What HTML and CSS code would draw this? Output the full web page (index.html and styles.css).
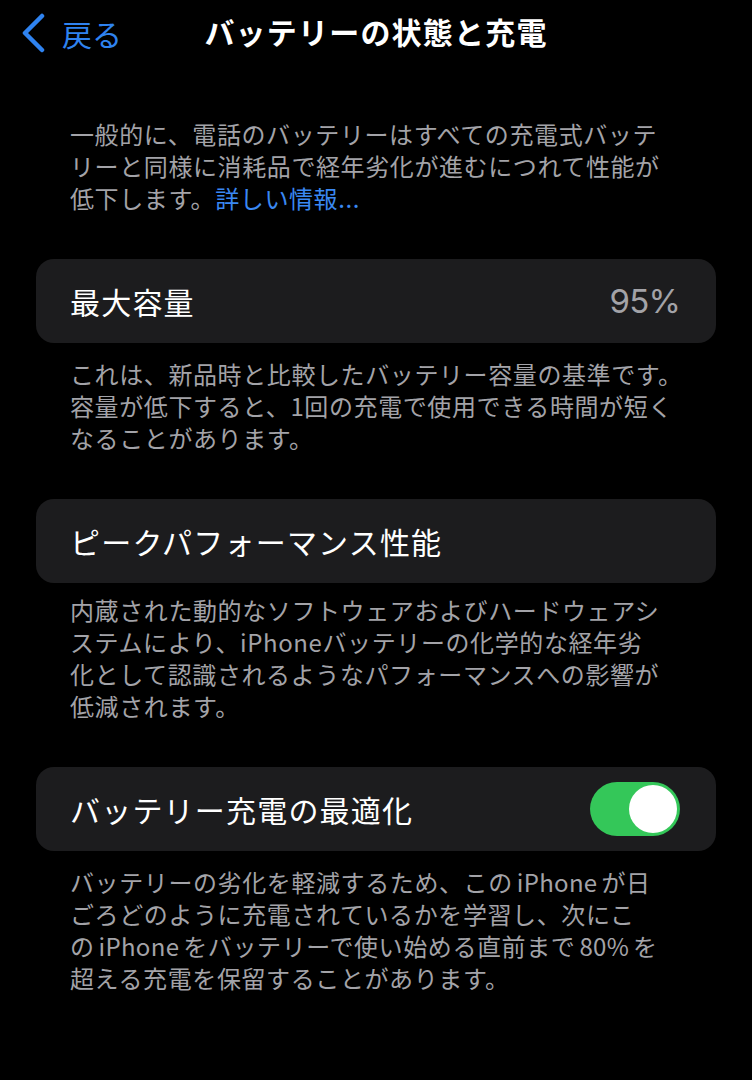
FILE: index.html
```html
<!DOCTYPE html>
<html lang="ja">
<head>
<meta charset="utf-8">
<title>バッテリーの状態と充電</title>
<link rel="stylesheet" href="styles.css">
</head>
<body>
<div class="screen">
  <header class="nav">
    <a class="back">
      <svg class="chev" width="28" height="40" viewBox="0 0 28 40"><polyline points="22,3 5,20 22,37" fill="none" stroke="#2f83f0" stroke-width="4.5" stroke-linecap="round" stroke-linejoin="round"/></svg>
      <span class="back-label">戻る</span>
    </a>
    <h1 class="title">バッテリーの状態と充電</h1>
    <span class="spacer"></span>
  </header>

  <p class="note intro">一般的に、電話のバッテリーはすべての充電式バッテ<br>リーと同様に消耗品で経年劣化が進むにつれて性能が<br>低下します。<span class="link">詳しい情報...</span></p>

  <div class="card">
    <span class="card-title">最大容量</span>
    <span class="card-value">95%</span>
  </div>
  <p class="note">これは、新品時と比較したバッテリー容量の基準です。<br>容量が低下すると、1回の充電で使用できる時間が短く<br>なることがあります。</p>

  <div class="card">
    <span class="card-title">ピークパフォーマンス性能</span>
  </div>
  <p class="note tight">内蔵された動的なソフトウェアおよびハードウェアシ<br>ステムにより、iPhoneバッテリーの化学的な経年劣<br>化として認識されるようなパフォーマンスへの影響が<br>低減されます。</p>

  <div class="card">
    <span class="card-title">バッテリー充電の最適化</span>
    <span class="toggle"><span class="knob"></span></span>
  </div>
  <p class="note">バッテリーの劣化を軽減するため、この<span class="lat">iPhone</span>が日<br>ごろどのように充電されているかを学習し、次にこ<br>の<span class="lat">iPhone</span>をバッテリーで使い始める直前まで<span class="lat">80%</span>を<br>超える充電を保留することがあります。</p>
</div>
</body>
</html>
```

FILE: styles.css
```css
html, body {
  margin: 0;
  padding: 0;
  background: #000;
}
body {
  width: 752px;
  height: 1080px;
  overflow: hidden;
  font-family: "Noto Sans CJK JP", "Noto Sans", sans-serif;
  color: #fff;
}
.screen {
  display: flex;
  flex-direction: column;
}
.nav {
  height: 68px;
  display: grid;
  grid-template-columns: 1fr auto 1fr;
  align-items: start;
}
.back {
  display: flex;
  align-items: center;
  gap: 14px;
  padding: 13px 0 0 20px;
  color: #2f83f0;
}
.chev {
  display: block;
}
.back-label {
  font-size: 30px;
  line-height: 40px;
}
.title {
  margin: 0;
  padding-top: 11px;
  font-size: 30px;
  font-weight: 700;
  line-height: 40px;
  letter-spacing: 1.2px;
}
.note {
  margin: 15px 0 0;
  padding: 0 20px 0 70px;
  font-size: 24px;
  line-height: 32px;
  letter-spacing: 0.6px;
  color: #a3a3a8;
  white-space: nowrap;
}
.note.tight {
  margin-top: 11px;
}
.intro {
  margin-top: 50px;
}
.lat {
  margin: 0 4px;
  letter-spacing: 0.3px;
}
.link {
  color: #3a88f2;
}
.card {
  margin: 45px 36px 0;
  height: 84px;
  border-radius: 18px;
  background: #1c1c1e;
  display: flex;
  align-items: center;
  justify-content: space-between;
  padding: 0 36px 0 34px;
}
.card-title {
  font-size: 30px;
  letter-spacing: 1.2px;
  line-height: 40px;
  color: #fff;
}
.card-value {
  font-size: 33px;
  letter-spacing: -0.8px;
  color: #a3a3a8;
  font-family: "Inter", "Liberation Sans", sans-serif;
  font-weight: 400;
}
.toggle {
  width: 90px;
  height: 54px;
  border-radius: 27px;
  background: #34c759;
  display: flex;
  align-items: center;
  justify-content: flex-end;
  padding: 0 3px;
  box-sizing: border-box;
}
.knob {
  width: 48px;
  height: 48px;
  border-radius: 50%;
  background: #fff;
}
```
